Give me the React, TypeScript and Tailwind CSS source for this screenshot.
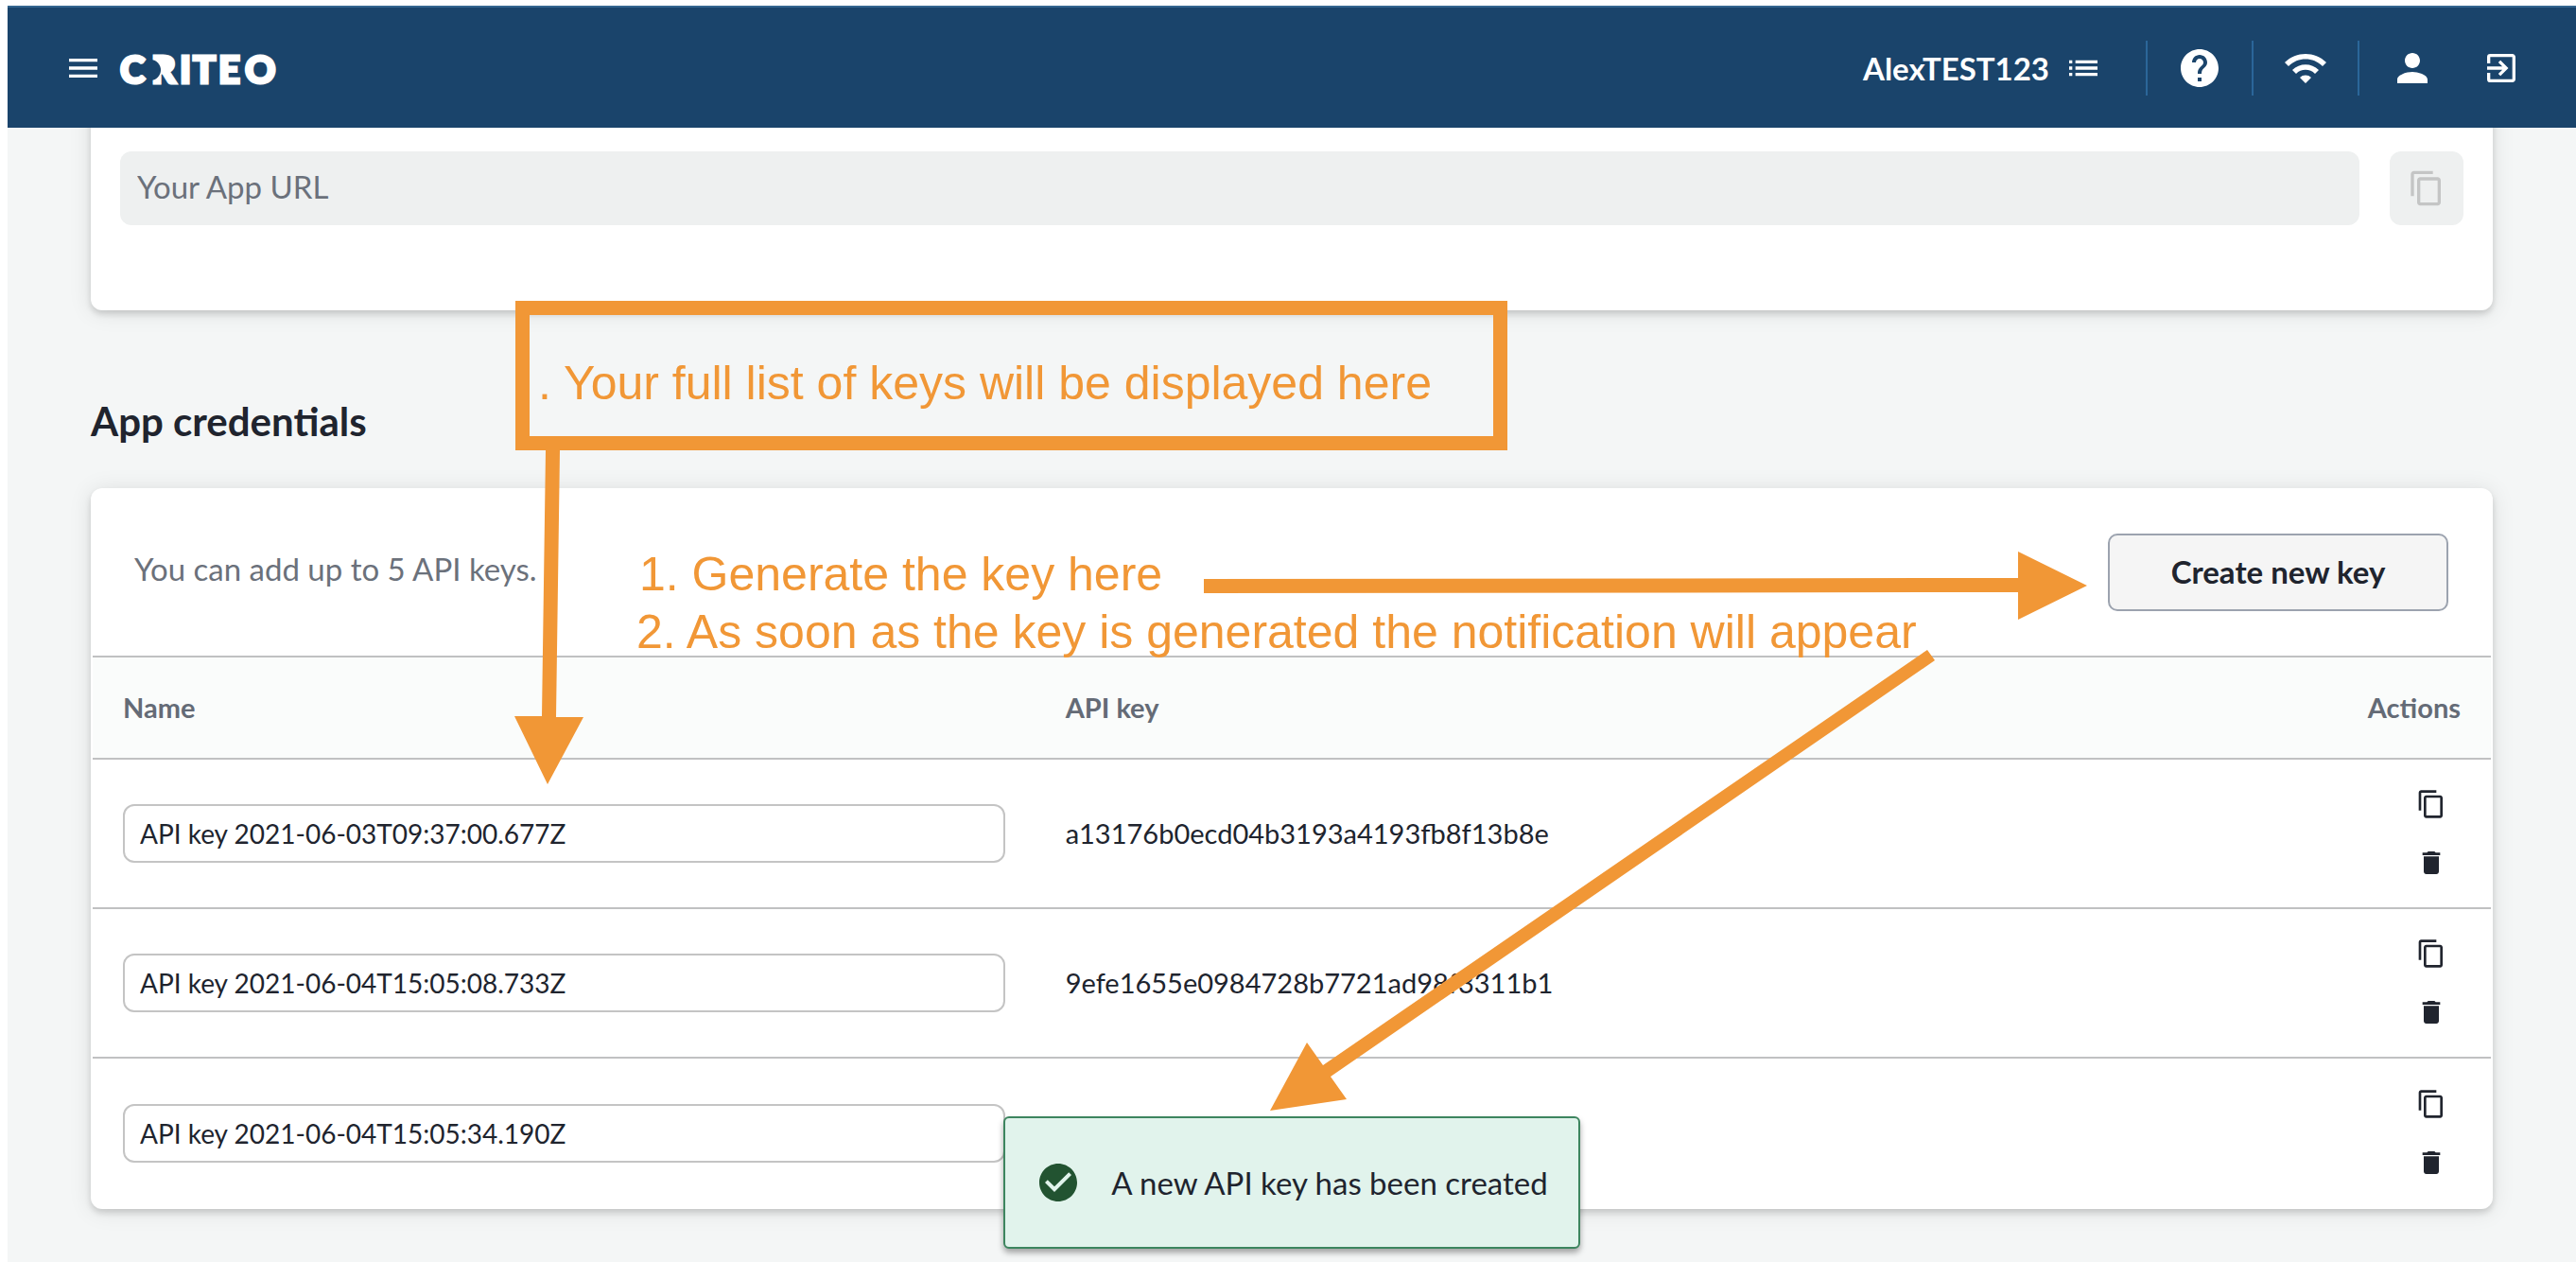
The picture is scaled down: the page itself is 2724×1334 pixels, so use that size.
import type { ReactNode } from "react";
import {
  MdCheckCircle,
  MdContentCopy,
  MdDelete,
  MdExitToApp,
  MdHelp,
  MdList,
  MdMenu,
  MdPerson,
  MdWifi,
} from "react-icons/md";

const keys = [
  { name: "API key 2021-06-03T09:37:00.677Z", key: "a13176b0ecd04b3193a4193fb8f13b8e" },
  { name: "API key 2021-06-04T15:05:08.733Z", key: "9efe1655e0984728b7721ad98f3311b1" },
  { name: "API key 2021-06-04T15:05:34.190Z", key: "" },
];

function Logo() {
  return (
    <svg
      viewBox="-4 0 176 56"
      className="h-14 w-44 font-['Lato',sans-serif] font-black"
      role="img"
      aria-label="Criteo"
    >
      <g fill="#fff" fontSize="40" stroke="#fff" strokeWidth="3">
        <text x="33" y="44">R</text>
        <circle cx="49" cy="24" r="6" />
        <circle cx="32" cy="30" r="11" fill="#1a446b" stroke="none" />
        <text x="0" y="44">C</text>
        <text x="63" y="44">I</text>
        <text x="77" y="44">T</text>
        <text x="104" y="44">E</text>
        <text x="132" y="44">O</text>
      </g>
    </svg>
  );
}

function HeaderAction({ label, children }: { label: string; children: ReactNode }) {
  return (
    <button type="button" aria-label={label} className="flex h-[58px] w-[112px] items-center justify-center">
      {children}
    </button>
  );
}

function Header() {
  return (
    <header className="flex h-[129px] items-center justify-between border-t-2 border-[#33658f] bg-[#1a446b] pt-px pr-[41px] pl-[60px] text-white">
      <div className="flex items-center gap-[15px]">
        <button type="button" aria-label="Menu">
          <MdMenu size={40} />
        </button>
        <a href="#home">
          <Logo />
        </a>
      </div>
      <div className="flex items-center">
        <button type="button" className="mr-[46px] flex items-center gap-[16px] text-[33px] leading-10 font-bold">
          AlexTEST123
          <MdList size={40} />
        </button>
        <div className="flex items-center divide-x-2 divide-[#2b6699]">
          <span className="h-[58px]" />
          <HeaderAction label="Help">
            <MdHelp size={48} />
          </HeaderAction>
          <HeaderAction label="Network">
            <MdWifi size={48} />
          </HeaderAction>
          <HeaderAction label="Account">
            <MdPerson size={48} />
          </HeaderAction>
        </div>
        <button type="button" aria-label="Log out" className="flex w-19 justify-center">
          <MdExitToApp size={40} />
        </button>
      </div>
    </header>
  );
}

function KeyTable() {
  return (
    <table className="w-full table-fixed border-collapse">
      <thead>
        <tr className="h-[108px] border-y-2 border-[#c0c1c2] bg-[#fafcfb] text-[29px] leading-9 text-[#646b76]">
          <th className="w-[39.3%] px-8 text-left font-bold">Name</th>
          <th className="px-8 text-left font-bold">API key</th>
          <th className="w-[12%] px-8 text-right font-bold">Actions</th>
        </tr>
      </thead>
      <tbody>
        {keys.map((row) => (
          <tr key={row.name} className="h-[158px] border-b-2 border-[#c0c1c2] text-[29px] last:border-b-0">
            <td className="px-8">
              <input
                aria-label="Key name"
                defaultValue={row.name}
                className="block h-[62px] w-full rounded-xl border-2 border-[#c4c4c4] px-4 text-[28px]"
              />
            </td>
            <td className="px-8">{row.key}</td>
            <td className="px-8">
              <div className="flex flex-col items-end gap-[30px] pr-[15px]">
                <button type="button" aria-label="Copy key">
                  <MdContentCopy size={32} />
                </button>
                <button type="button" aria-label="Delete key">
                  <MdDelete size={32} />
                </button>
              </div>
            </td>
          </tr>
        ))}
      </tbody>
    </table>
  );
}

function Toast() {
  return (
    <div className="absolute inset-x-0 bottom-[14px] flex justify-center">
      <div
        role="status"
        className="flex h-[140px] items-center gap-[32px] rounded-md border-2 border-[#3d855f] bg-[#e1f3ec] px-8 text-[33px] leading-10 shadow-[0_4px_6px_rgba(0,0,0,0.35)]"
      >
        <MdCheckCircle size={48} className="text-[#225331]" />
        A new API key has been created
      </div>
    </div>
  );
}

function Annotations() {
  return (
    <div className="pointer-events-none absolute inset-0 font-['Liberation_Sans',Arial,sans-serif] text-[50px] leading-[61px] whitespace-nowrap text-[#f19736]">
      <svg className="absolute top-0 left-0 h-[1334px] w-[2724px]" viewBox="0 0 2724 1334" fill="#f19736">
        <path d="M577 476H592L588 758L617 758L579 829L544 757L573 757Z" />
        <path d="M1273 612L2134 611V583L2207 619L2134 655V626L1273 627Z" />
        <path d="M2038 687L2046 698L1407 1138L1424 1162L1343 1174L1382 1102L1399 1126Z" />
      </svg>
      <div className="absolute top-[318px] left-[545px] h-[158px] w-[1049px] border-[15px] border-[#f19736] pt-[42px] pl-[9px]">
        . Your full list of keys will be displayed here
      </div>
      <p className="absolute top-[577px] left-[676px]">1. Generate the key here</p>
      <p className="absolute top-[638px] left-[673px]">2. As soon as the key is generated the notification will appear</p>
    </div>
  );
}

export default function App() {
  return (
    <div className="relative min-h-screen overflow-hidden bg-white pt-1.5 pl-2 font-['Lato',sans-serif] text-[#20242e]">
      <div className="relative min-h-[1328px] bg-[#f4f6f6]">
        <div className="relative z-10">
          <Header />
        </div>
        <main className="px-[88px]">
          <section className="-mt-10 flex gap-8 rounded-xl bg-white px-[31px] pt-[65px] pb-[90px] shadow-[0_4px_6px_rgba(0,0,0,0.14),0_2px_24px_rgba(0,0,0,0.10)]">
            <input
              aria-label="Your App URL"
              placeholder="Your App URL"
              disabled
              className="h-[78px] min-w-0 flex-1 rounded-xl bg-[#eef0f0] px-[18px] pb-1 text-[33px] placeholder:text-[#6b717b]"
            />
            <button
              type="button"
              disabled
              aria-label="Copy URL"
              className="flex h-[78px] w-[78px] items-center justify-center rounded-xl bg-[#eef0f0] text-[#c4c5c5]"
            >
              <MdContentCopy size={40} />
            </button>
          </section>

          <h2 className="mt-[92px] text-[42px] leading-[50px] font-bold">App credentials</h2>

          <section className="mt-[46px] rounded-xl bg-white px-0.5 pb-0.5 shadow-[0_4px_6px_rgba(0,0,0,0.14),0_2px_24px_rgba(0,0,0,0.10)]">
            <div className="flex h-[177px] items-center justify-between pr-[45px] pl-[44px]">
              <p className="pb-2 text-[33px] leading-10 text-[#6b717b]">You can add up to 5 API keys.</p>
              <button
                type="button"
                className="h-[82px] w-[360px] rounded-[10px] border-2 border-[#9ca3af] bg-[#f5f5f5] text-[33px] font-bold"
              >
                Create new key
              </button>
            </div>
            <KeyTable />
          </section>
        </main>
        <Toast />
      </div>
      <Annotations />
    </div>
  );
}
